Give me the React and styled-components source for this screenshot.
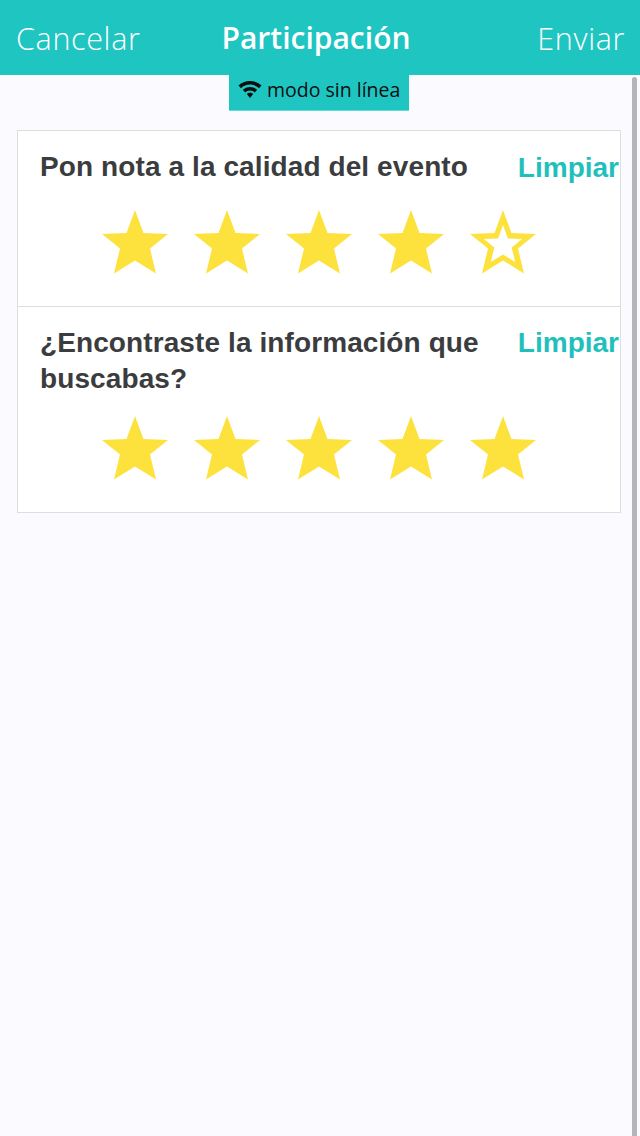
import styled, { createGlobalStyle } from "styled-components";

const GlobalStyle = createGlobalStyle`
  html, body {
    margin: 0;
    padding: 0;
    background: #fbfaff;
  }
  * {
    box-sizing: border-box;
  }
`;

const Page = styled.div`
  position: relative;
  width: 640px;
  height: 1136px;
  overflow: hidden;
  background: #fbfaff;
  display: flex;
  flex-direction: column;
`;
const Header = styled.header`
  height: 75px;
  flex: none;
  background: #1fc5c1;
  color: #fff;
  font-family: "Open Sans", sans-serif;
  font-size: 30px;
  display: grid;
  grid-template-columns: 1fr auto 1fr;
  align-items: center;
  padding: 0 15px 0 16px;
`;
const HeaderButton = styled.span`
  justify-self: ${(props) => (props.$right ? "end" : "start")};
  font-size: 30.5px;
  font-weight: 300;
  letter-spacing: 0.65px;
`;
const HeaderTitle = styled.span`
  font-weight: 600;
  margin-right: 9px;
`;
const OfflineBadge = styled.div`
  align-self: flex-start;
  margin-left: 229px;
  width: 180px;
  height: 36px;
  background: #1fc5c1;
  border-bottom: 1px solid #5fdcd8;
  color: #0b0f10;
  font-family: "Open Sans", sans-serif;
  font-size: 19.5px;
  display: flex;
  align-items: center;
  gap: 5px;
  padding: 0 0 6px 9px;
  white-space: nowrap;
`;
const Card = styled.section`
  margin: 19px 19px 0 17px;
  background: #fff;
  border: 1px solid #dedee1;
  font-family: "Liberation Sans", Arial, sans-serif;
`;
const Question = styled.div`
  height: ${(props) => props.$height}px;
  padding-top: ${(props) => props.$top}px;
  border-top: ${(props) => (props.$first ? "none" : "1px solid #dedee1")};
`;
const QuestionHead = styled.div`
  display: flex;
  align-items: flex-start;
  justify-content: space-between;
  padding-left: 22px;
`;
const QuestionText = styled.div`
  width: 450px;
  color: #3b3c3e;
  font-size: 28px;
  font-weight: 700;
  letter-spacing: 0.1px;
  line-height: 36px;
`;
const ClearButton = styled.span`
  color: #1fc0bc;
  font-size: 28px;
  font-weight: 700;
  line-height: 36px;
  margin-top: ${(props) => props.$offset}px;
  margin-right: 1px;
`;
const Stars = styled.div`
  display: flex;
  gap: 26px;
  padding-left: 84px;
  margin-top: ${(props) => props.$gap}px;
`;
const StarIcon = styled.svg`
  width: 66px;
  height: 64px;
  display: block;
`;
const ScrollBar = styled.div`
  position: absolute;
  top: 77px;
  right: 3px;
  bottom: 0;
  width: 5px;
  border-radius: 3px 3px 0 0;
  background: #b5b3bb;
`;

const STAR_OUTER = "M33 0 L41.5 23 L66 24 L48 38.5 L54 63.5 L33 50.5 L12 63.5 L18 38.5 L0 24 L24.5 23 Z";
const STAR_INNER = "M33 15.1 L37.9 28.5 L52.1 29 L41.7 37.4 L45.2 52 L33 44.4 L20.8 52 L24.3 37.4 L13.9 29 L28.1 28.5 Z";

const Star = ({ empty }) => (
  <StarIcon viewBox="0 0 66 64">
    <path d={empty ? `${STAR_OUTER} ${STAR_INNER}` : STAR_OUTER} fill="#fde23e" fillRule="evenodd" />
  </StarIcon>
);

const Wifi = () => (
  <svg width="24" height="18" viewBox="0 0 24 18">
    <path d="M12 0 C7.5 0 3.6 1.7 .5 4.5 L3 7.2 C5.4 5 8.5 3.6 12 3.6 C15.5 3.6 18.6 5 21 7.2 L23.5 4.5 C20.4 1.7 16.5 0 12 0 Z" fill="#0b0f10" />
    <path d="M12 6 C9.2 6 6.7 7.1 4.8 8.8 L7.3 11.4 C8.5 10.2 10.2 9.5 12 9.5 C13.8 9.5 15.5 10.2 16.7 11.4 L19.2 8.8 C17.3 7.1 14.8 6 12 6 Z" fill="#0b0f10" />
    <path d="M12 11.8 C10.7 11.8 9.6 12.3 8.8 13.1 L12 17 L15.2 13.1 C14.4 12.3 13.3 11.8 12 11.8 Z" fill="#0b0f10" />
  </svg>
);

const questions = [
  { text: "Pon nota a la calidad del evento", rating: 4, height: 175, top: 18, offset: 1, gap: 24 },
  { text: "¿Encontraste la información que buscabas?", rating: 5, height: 206, top: 18, offset: 0, gap: 19 },
];

const App = () => {
  return (
    <Page>
      <GlobalStyle />
      <Header>
        <HeaderButton>Cancelar</HeaderButton>
        <HeaderTitle>Participación</HeaderTitle>
        <HeaderButton $right>Enviar</HeaderButton>
      </Header>
      <OfflineBadge>
        <Wifi />
        <span>modo sin línea</span>
      </OfflineBadge>
      <Card>
        {questions.map((q, i) => (
          <Question key={q.text} $first={i === 0} $height={q.height} $top={q.top}>
            <QuestionHead>
              <QuestionText>{q.text}</QuestionText>
              <ClearButton $offset={q.offset}>Limpiar</ClearButton>
            </QuestionHead>
            <Stars $gap={q.gap}>
              {[1, 2, 3, 4, 5].map((n) => (
                <Star key={n} empty={n > q.rating} />
              ))}
            </Stars>
          </Question>
        ))}
      </Card>
      <ScrollBar />
    </Page>
  );
};

export default App;
